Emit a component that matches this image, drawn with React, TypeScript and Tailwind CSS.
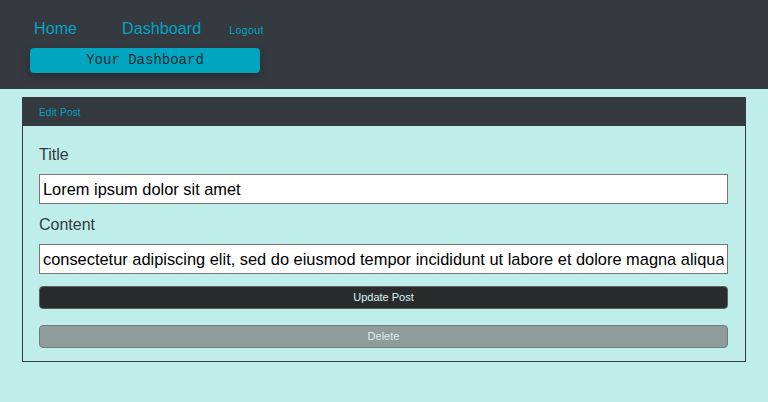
import React from "react";

export default function App() {
  const sans = { fontFamily: '"Liberation Sans", Arial, sans-serif' };
  return (
    <div className="min-h-[402px] w-full bg-[#bfedea]" style={sans}>
      <header className="h-[89px] bg-[#343a40] px-[30px] pt-[17px]">
        <nav className="flex items-baseline text-[#00a5c0]">
          <a className="ml-[4px] text-[16px] tracking-[0.1px]">Home</a>
          <a className="ml-[45px] text-[16px] tracking-[0.1px]">Dashboard</a>
          <a className="ml-[28px] text-[10.5px] tracking-[0.4px]">Logout</a>
        </nav>
        <div
          className="mt-[7px] flex h-[25px] w-[230px] items-center justify-center rounded-[4px] bg-[#00a5c0] text-[14px] text-[#1d2b30] shadow-[0_4px_10px_rgba(0,0,0,0.25)]"
          style={{ fontFamily: '"Liberation Mono", "Courier New", monospace' }}
        >
          Your Dashboard
        </div>
      </header>
      <div className="px-[22px] pt-[8px]">
        <div className="w-[724px] border border-[#343a40]">
          <div className="flex h-[28px] items-center bg-[#343a40] px-[16px] text-[10px] tracking-[0.2px] text-[#00a5c0]">
            Edit Post
          </div>
          <div className="px-[16px] pb-[13px] pt-[19px]">
            <div className="text-[16px] leading-[19px] text-[#343a40]">Title</div>
            <input
              readOnly
              value="Lorem ipsum dolor sit amet"
              className="mt-[10px] block h-[30px] w-[689px] border border-[#767676] bg-white px-[3px] text-[16.4px] text-black outline-none"
              style={sans}
            />
            <div className="mt-[11px] text-[16px] leading-[19px] text-[#343a40]">Content</div>
            <input
              readOnly
              value="consectetur adipiscing elit, sed do eiusmod tempor incididunt ut labore et dolore magna aliqua. Ut enim ad minim veniam"
              className="mt-[10px] block h-[30px] w-[689px] border border-[#767676] bg-white px-[3px] text-[16.4px] text-black outline-none"
              style={sans}
            />
            <button
              className="mt-[12px] flex h-[23px] w-[689px] items-center justify-center rounded-[4px] border border-[#5a6166] bg-[#292b2c] text-[11px] text-[#d7f4f2]"
              style={sans}
            >
              Update Post
            </button>
            <button
              className="mt-[16px] flex h-[23px] w-[689px] items-center justify-center rounded-[4px] border border-[#6f7d7b] bg-[#8e9d9b] text-[11px] text-[#dcebe9]"
              style={sans}
            >
              Delete
            </button>
          </div>
        </div>
      </div>
    </div>
  );
}
